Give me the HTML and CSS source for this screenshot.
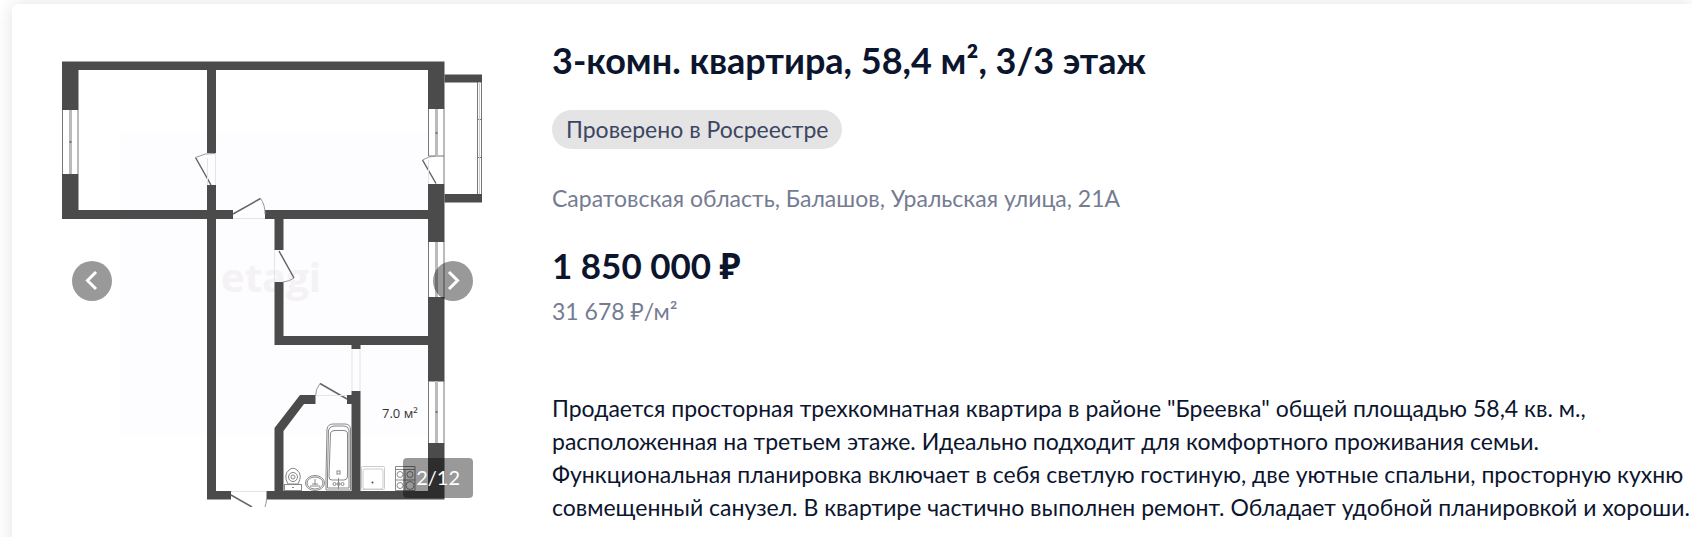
FILE: index.html
```html
<!DOCTYPE html>
<html lang="ru">
<head>
<meta charset="utf-8">
<meta name="viewport" content="width=device-width, initial-scale=1">
<title>3-комн. квартира</title>
<link rel="stylesheet" href="styles.css">
</head>
<body>
<article class="card">
  <div class="gallery">
    <svg class="plan" viewBox="60 55 425 452" role="img" aria-label="План квартиры">
      <rect class="tint" x="120" y="132" width="308" height="303"/>
      <text class="watermark" x="221" y="292">etagi</text>
      <!-- Walls -->
      <g class="wall">
        <path d="M62 61.5H444.500V109H428V70H216V153H207V70H78.500V110H62Z"/>
        <path d="M62 174H78.500V210H207V185H216V210H233V219H216V491H231V499.500H207V219H62Z"/>
        <path d="M265 210H428V184H444.500V242H428V219H283.500V250H274.500V219H265Z"/>
        <path d="M274.500 282H283.500V336H428V297H444.500V381.500H428V345H360.500V349H351.500V345H274.500Z"/>
        <path d="M444.500 74.500H482V82.500H444.500ZM444.500 194H482V202.500H444.500Z"/>
        <path d="M300 395H315.500V404H304L283.500 431V491H351.500V404H347V395H351.500V391H360.500V491H428V443H444.500V499.500H266.500V491H274.500V428Z"/>
      </g>
      <!-- Windows -->
      <g class="glass">
        <path d="M62.500 110V174M78 110V174M428.500 109V156H444V109M444 156V184M428.500 242V297M444 242V297M428.500 381V443M444 381V443M477.500 82V194M481.500 82V194M477 119.500H482M477 157.500H482"/>
      </g>
      <path class="rail" d="M479.500 82V194"/>
      <path class="pane" d="M70.500 110V174M436.500 109V156M436.500 242V297M436.500 381V443"/>
      <path class="knob" d="M69.500 142h2M435.500 133h2M435.500 412h2"/>
      <!-- Doors -->
      <path class="leaf" d="M211 185L195.500 157.500M233 214L260.500 198.500M436 183.500L422.500 160M279 251L294 278M347 399L320 383.500M231 495L252 507"/>
      <path class="swing" d="M195.500 157.500Q205 152.500 216 153.500M260.500 198.500Q265 204 265 214M422.500 160Q429 156 436 156M294 278Q289 281.500 283 282M320 383.500Q315.500 389 315.500 396M266.500 499Q266.500 503 265 507"/>
      <path class="sill" d="M215.500 153V185M207.500 158V185M233 218.500H265M274.500 250V282M352 349V391M360 349V391M316 395.500H347M231 491.500H266M428.500 160V184"/>
      <!-- Plumbing -->
      <g class="fixture">
        <rect x="284.500" y="484.500" width="17" height="6"/>
        <path d="M288 484Q283 475 289 470Q293 466.500 297 470Q303 475 298 484Z"/>
        <circle cx="293" cy="477" r="4.500"/><circle cx="293" cy="477" r="2"/>
        <ellipse cx="315" cy="483" rx="9.500" ry="7.500"/>
        <ellipse cx="315" cy="483" rx="8" ry="6"/>
        <path d="M315 479V485M310 486H320M312 484H318M292 487.500h2"/>
        <path d="M326 490V475L327 429Q328 424 333 424H345Q350 424 350.500 429V490Z"/>
        <path d="M327.500 488V475L328.500 430Q330 426 334 426H344Q348 426 349 430V488Z"/>
        <path d="M329 477L330.500 433Q331 430.500 335 430.500H344Q347 430.500 347.500 433V477Q347 480 344 480H332Q329 480 329 477Z"/>
        <rect x="337" y="471" width="3" height="3"/>
        <path d="M338.500 478V489"/><circle cx="334.500" cy="484" r="1.500"/><circle cx="338.500" cy="484" r="1.500"/><circle cx="342.500" cy="484" r="1.500"/>
      </g>
      <g class="basin">
        <rect x="361.500" y="466.500" width="23" height="23" rx="1"/>
        <rect x="363" y="469" width="20" height="20" rx="2"/>
      </g>
      <circle class="dot" cx="372.500" cy="482.500" r="1"/>
      <g class="stove">
        <path d="M395.500 466.500H415V490.500H395.500ZM395.500 469.500H415M395.500 480H415M405 469V490"/>
        <circle cx="400" cy="474.500" r="3"/><circle cx="410" cy="474.500" r="3"/><circle cx="400" cy="485.500" r="3"/><circle cx="410" cy="485.500" r="4"/>
      </g>
      <text class="area" x="382" y="418">7.0 м²</text>
    </svg>
    <button class="arrow arrow-prev" type="button" aria-label="Предыдущее фото">
      <svg viewBox="0 0 40 40"><path d="M24 11L15.500 19.500L24 28"/></svg>
    </button>
    <button class="arrow arrow-next" type="button" aria-label="Следующее фото">
      <svg viewBox="0 0 40 40"><path d="M16 11L24.500 19.500L16 28"/></svg>
    </button>
    <span class="counter">2/12</span>
  </div>
  <div class="info">
    <h1 class="title">3-комн. квартира, 58,4 м², 3/3 этаж</h1>
    <span class="badge">Проверено в Росреестре</span>
    <p class="address">Саратовская область, Балашов, Уральская улица, 21А</p>
    <p class="price">1 850 000 ₽</p>
    <p class="unit-price">31 678 ₽/м²</p>
    <p class="description">Продается просторная трехкомнатная квартира в районе "Бреевка" общей площадью 58,4 кв. м.,<br>расположенная на третьем этаже. Идеально подходит для комфортного проживания семьи.<br>Функциональная планировка включает в себя светлую гостиную, две уютные спальни, просторную кухню<br>совмещенный санузел. В квартире частично выполнен ремонт. Обладает удобной планировкой и хороши.</p>
  </div>
</article>
</body>
</html>
```
FILE: styles.css
```css
* { box-sizing: border-box; }

body {
  margin: 0;
  padding: 4px 0 0 12px;
  overflow: hidden;
  background: #fff;
  color: #0c152e;
  font: 23px/33px Lato, "Noto Sans", sans-serif;
}

h1, p { margin: 0; }

.card {
  display: flex;
  align-items: flex-start;
  gap: 67px;
  min-height: 100vh;
  padding: 34px 0 34px 48px;
  border-radius: 6px 0 0 6px;
  background: #fff;
  box-shadow: 0 0 18px rgba(0, 0, 0, 0.12);
}

.gallery {
  position: relative;
  flex: none;
  width: 425px;
  margin-top: 17px;
}

.plan { display: block; width: 100%; }
.tint { fill: #fdfcfe; }
.watermark { fill: #f4f2f4; font: 700 40px "Open Sans", sans-serif; }
.wall { fill: #4b4b4b; }
.glass { fill: none; stroke: #777; stroke-width: 1; }
.rail { stroke: #ccc; stroke-width: 1; }
.pane { stroke: #bbb; stroke-width: 3; }
.knob { stroke: #777; stroke-width: 2; }
.leaf { stroke: #666; stroke-width: 1.5; }
.swing { fill: none; stroke: #999; }
.sill { fill: none; stroke: #e4e4e4; }
.fixture { fill: none; stroke: #888; stroke-width: 1; }
.basin { fill: none; stroke: #ccc; stroke-width: 1; }
.dot { fill: #444; }
.stove { fill: none; stroke: #888; }
.area { fill: #333; font: 13px "Open Sans", sans-serif; }

.arrow {
  position: absolute;
  top: 50%;
  width: 40px;
  height: 40px;
  margin-top: -20px;
  padding: 0;
  border: 0;
  border-radius: 50%;
  background: rgba(0, 0, 0, 0.4);
  cursor: pointer;
}

.arrow svg { display: block; fill: none; stroke: #fff; stroke-width: 3; }
.arrow-prev { left: 12px; }
.arrow-next { right: 12px; }

.counter {
  position: absolute;
  right: 12px;
  bottom: 9px;
  padding: 3px 13px 4px;
  border-radius: 4px;
  background: rgba(0, 0, 0, 0.4);
  color: #fff;
  font-size: 20px;
}

.info { flex: 1; min-width: 0; }
.title { font-size: 36px; font-weight: 700; line-height: 44px; }

.badge {
  display: inline-block;
  margin-top: 28px;
  padding: 3px 14px;
  border-radius: 20px;
  background: #e4e4e4;
  color: #3c4563;
}

.address { margin-top: 33px; color: #757c92; }
.price { margin-top: 28px; font-size: 35px; font-weight: 700; line-height: 44px; }
.unit-price { margin-top: 8px; color: #757c92; }
.description { margin-top: 64px; white-space: nowrap; }
```
